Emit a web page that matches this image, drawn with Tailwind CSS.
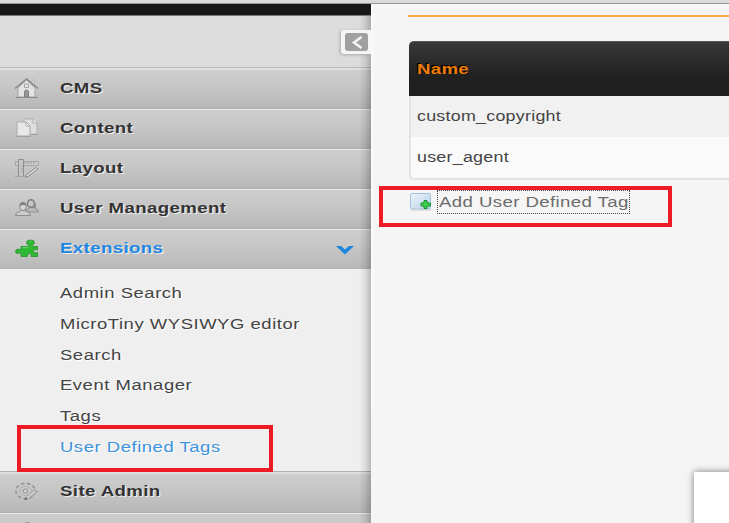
<!DOCTYPE html>
<html lang="en">
<head>
<meta charset="utf-8">
<title>User Defined Tags</title>
<script src="https://cdn.jsdelivr.net/npm/@tailwindcss/browser@4"></script>
</head>
<body class="w-[729px] h-[523px] overflow-hidden bg-[#f5f5f5] font-['Liberation_Sans',sans-serif] text-[14px] leading-[20px] text-[#333]">
<div class="relative w-[729px] h-[523px] overflow-hidden flex flex-col">
  <div class="h-[4px] shrink-0 bg-[#dadada] border-b border-[#999]"></div>
  <div class="flex h-[519px]">
    <aside class="relative w-[371px] shrink-0 flex flex-col bg-[#dcdcdc]">
      <div class="h-[12px] shrink-0 bg-[#171717] border-b border-[#777]"></div>
      <div class="h-[52px] shrink-0 border-b border-[#b8b8b8] bg-[#dcdcdc]"></div>
      <nav class="flex flex-col whitespace-nowrap font-bold tracking-[0.3px] [text-shadow:1px_1px_0_#eee]">
        <div class="h-[41px] shrink-0 flex items-center pl-[14px] pb-[3px] border-t-2 border-t-[#dfdfdf] border-b border-b-[#adadad] bg-linear-to-b from-[#cfcfcf] via-[#c5c5c5] to-[#b7b7b7]">
          <svg class="w-[26px] h-[22px] mr-[20px]" viewBox="0 0 26 22" fill="none"><path d="M4 11v9h17v-9l-8.500-8z" fill="#e3e3e3" stroke="#a5a5a5"/><path d="M18 3h2.500v5l-2.500-2z" fill="#ddd" stroke="#b5b5b5"/><path d="M1 11.500 12.500 2 24 11.500" stroke="#8a8a8a" stroke-width="1.600"/><path d="M10.500 7h4v3.500h-4z" stroke="#a5a5a5"/><path d="M10.500 20v-5q0-2 2-2t2 2v5z" fill="#999" stroke="#808080"/><path d="M2 20.500h22" stroke="#888"/></svg>
          <span class="origin-left scale-x-[1.33]">CMS</span>
        </div>
        <div class="h-[40px] shrink-0 flex items-center pl-[14px] pb-[2px] border-t border-t-[#eee] border-b border-b-[#adadad] bg-linear-to-b from-[#cfcfcf] via-[#c5c5c5] to-[#b7b7b7]">
          <svg class="w-[26px] h-[22px] mr-[20px]" viewBox="0 0 26 22" fill="none"><path d="M10 2h9l4 4v11H10z" fill="#dedede" stroke="#b0b0b0"/><path d="M19 2v4h4" fill="#f5f5f5" stroke="#aaa"/><path d="M3 5h9l4 4v10H3z" fill="#e8e8e8" stroke="#aaa"/><path d="M12 5v4h4z" fill="#f5f5f5" stroke="#aaa"/><path d="M2 19.500h15M17 17.500h7" stroke="#a2a2a2"/></svg>
          <span class="origin-left scale-x-[1.33]">Content</span>
        </div>
        <div class="h-[40px] shrink-0 flex items-center pl-[14px] pb-[2px] border-t border-t-[#eee] border-b border-b-[#adadad] bg-linear-to-b from-[#cfcfcf] via-[#c5c5c5] to-[#b7b7b7]">
          <svg class="w-[26px] h-[22px] mr-[20px]" viewBox="0 0 26 22" fill="none"><path d="M1.500 4.500h23v4h-23z" fill="#ccc" stroke="#a5a5a5"/><path d="M11 5v2M14 5v2M17 5v2M20 5v2" stroke="#999"/><path d="M4.500 2.500h5v17h-5z" fill="#c6c6c6" stroke="#8e8e8e"/><path d="M7 9h2M7 12h2M7 15h2" stroke="#a0a0a0"/><path d="m12 18 10-7.500 2 1.500-10 7.500-3 .500z" fill="#ddd" stroke="#888"/><path d="M1 19.500h9" stroke="#a5a5a5"/></svg>
          <span class="origin-left scale-x-[1.33]">Layout</span>
        </div>
        <div class="h-[40px] shrink-0 flex items-center pl-[14px] pb-[2px] border-t border-t-[#eee] border-b border-b-[#adadad] bg-linear-to-b from-[#cfcfcf] via-[#c5c5c5] to-[#b7b7b7]">
          <svg class="w-[26px] h-[22px] mr-[20px]" viewBox="0 0 26 22" fill="none"><path d="M12 15q0-3 3-4l2-1h2l2 1q3.500 1 3.500 4z" fill="#b8b8b8" stroke="#909090"/><ellipse cx="17" cy="6.500" rx="3.500" ry="3.800" fill="#c5c5c5" stroke="#808080" stroke-width="1.500"/><path d="M20 5q2 3 1 6" stroke="#8a8a8a" stroke-width="1.500"/><path d="M1.500 18.500q0-3.500 4-4l2-1h3l2 1q4 .500 4 4z" fill="#ccc" stroke="#8c8c8c"/><ellipse cx="9" cy="9.800" rx="3.300" ry="3.800" fill="#d5d5d5" stroke="#848484"/><path d="M5.500 9q0-4 3.500-4t3.500 4q-2-2-7 0z" fill="#808080"/></svg>
          <span class="origin-left scale-x-[1.33]">User Management</span>
        </div>
        <div class="h-[40px] shrink-0 flex items-center pl-[14px] pb-[2px] border-t border-t-[#eee] border-b border-b-[#b3b3b3] bg-linear-to-b from-[#cfcfcf] via-[#c5c5c5] to-[#b9b9b9] text-[#1e86e0]">
          <svg class="w-[26px] h-[22px] mr-[20px]" viewBox="0 0 26 22" fill="none"><path d="M7 9.500h6.800q1.200-1 .200-2-1.500-.300-1.500-2 0-2.500 4-2.500t4 2.500q0 1.700-1.500 2-1 1 .200 2H23.500V13q-2-.800-3.500 0-1.500 1.200 0 2.500 1.500.800 3.500 0v4H17q1-3-1.500-3t-2 3H7V16q-1.500-.500-2.500.500Q1.500 17 1.500 14.500t3-2.300Q6 13 7 12.500z" fill="#2eb833" stroke="#2f9632" stroke-width=".9"/><path d="M8.500 10.700h6M15.500 4.200h2" stroke="#65d466"/></svg>
          <span class="origin-left scale-x-[1.33]">Extensions</span>
          <svg class="w-[18px] h-[9px] ml-auto mr-[17px] mt-[4px]" viewBox="0 0 18 9"><path d="M0 0h5l4 3.500L13 0h5L9 8.500z" fill="#1e86e0"/></svg>
        </div>
        <ul class="h-[202px] shrink-0 pt-[9px] pl-[60px] bg-[#efefef] font-normal text-[#444] leading-[30.800px] tracking-[0.400px] [text-shadow:1px_1px_0_#fff]">
          <li class="origin-left scale-x-[1.32]">Admin Search</li>
          <li class="origin-left scale-x-[1.32]">MicroTiny WYSIWYG editor</li>
          <li class="origin-left scale-x-[1.32]">Search</li>
          <li class="origin-left scale-x-[1.32]">Event Manager</li>
          <li class="origin-left scale-x-[1.32]">Tags</li>
          <li class="origin-left scale-x-[1.32] text-[#3e93dc]">User Defined Tags</li>
        </ul>
        <div class="h-[42px] shrink-0 flex items-center pl-[14px] pb-[2px] border-t border-t-[#b0b0b0] border-b border-b-[#adadad] shadow-[inset_0_2px_0_#dfdfdf] bg-linear-to-b from-[#cfcfcf] via-[#c5c5c5] to-[#b7b7b7]">
          <svg class="w-[26px] h-[22px] mr-[20px]" viewBox="0 0 26 22" fill="none"><ellipse cx="11.500" cy="11" rx="9.500" ry="7.500" stroke="#999" stroke-width="2" stroke-dasharray="3.500 2.400"/><ellipse cx="11.500" cy="11" rx="8.500" ry="6.500" fill="#c9c9c9"/><ellipse cx="11.500" cy="11" rx="6" ry="4.500" stroke="#b0b0b0"/><ellipse cx="11.500" cy="11" rx="2.500" ry="2" fill="#d2d2d2" stroke="#8c8c8c"/><path d="m12 17 8-7 3.500 1.500-9 7-3.500 1z" fill="#ccc" stroke="#999"/><path d="m10.500 20 3-1-2-1.500z" fill="#555"/></svg>
          <span class="origin-left scale-x-[1.33]">Site Admin</span>
        </div>
        <div class="h-[40px] shrink-0 flex items-start pl-[24px] pt-[8px] border-t border-t-[#eee] bg-[#cbcbcb]"><div class="w-[7px] h-[5px] rounded-[50%] bg-[#999]"></div></div>
      </nav>
      <div class="absolute right-0 top-[12px] bottom-0 w-[12px] bg-linear-to-r from-transparent via-black/8 to-black/22"></div>
      <div class="absolute right-0 top-[26px] w-[30px] h-[24px] flex items-center pl-[4px] rounded-l-[3px] bg-[#f5f5f5] shadow-[-1px_1px_3px_#aaa]">
        <div class="w-[23px] h-[18px] rounded-[3px] bg-[#a0a0a0] flex items-center justify-center"><svg class="w-[12px] h-[13px]" viewBox="0 0 12 13"><path d="M10.500 1 3 6.500l7.500 5.500" fill="none" stroke="#f5f5f5" stroke-width="2.500"/></svg></div>
      </div>
    </aside>
    <main class="grow min-w-0 pl-[37px] bg-[#f5f5f5] whitespace-nowrap">
      <div class="h-[13px] border-b-2 border-[#faa94a]"></div>
      <div class="mt-[24px] ml-[1px] w-[400px] rounded-[5px] overflow-hidden">
        <div class="h-[55px] pl-[8px] flex items-center bg-linear-to-b from-[#393939] to-[#202020] to-65% border-t border-[#555] text-[#ef7b00] font-bold tracking-[0.3px] [text-shadow:-1px_-1px_0_#000]"><span class="origin-left scale-x-[1.32]">Name</span></div>
        <div class="border-l-2 border-b-2 border-[#e2e2e2] rounded-bl-[5px] text-[#444] tracking-[0.200px]">
          <div class="h-[41px] pl-[6px] pb-[2px] flex items-center bg-[#f1f1f1]"><span class="origin-left scale-x-[1.275]">custom_copyright</span></div>
          <div class="h-[41px] pl-[6px] pb-[2px] flex items-center bg-[#fafafa] rounded-bl-[3px]"><span class="origin-left scale-x-[1.275]">user_agent</span></div>
        </div>
      </div>
      <div class="flex items-center pl-[2px] mt-[10px] h-[24px] text-[#6c6c6c]">
        <svg class="w-[22px] h-[18px] mr-[5px]" viewBox="0 0 22 18"><defs><linearGradient id="card" x2="1" y2="1"><stop stop-color="#edf5fb"/><stop offset="1" stop-color="#b5d0e8"/></linearGradient></defs><rect x=".5" y=".5" width="20" height="15.500" rx="1.500" fill="url(#card)" stroke="#a3c1dc"/><path d="M1 17h20" stroke="#ccc"/><path d="M14 7.500h3v2.500h3.500v3H17v2.500h-3V13h-3v-3h3z" fill="#41cf50" stroke="#16912b"/></svg>
        <span class="w-[193px] h-[24px] flex items-center pl-px border border-dotted border-[#444] tracking-[0.300px]"><span class="origin-left scale-x-[1.33]">Add User Defined Tag</span></span>
      </div>
    </main>
  </div>
  <div class="absolute left-[371px] top-[4px] w-[2px] h-[407px] bg-[#fafafa]"></div>
  <div class="absolute left-[694px] top-[472px] w-[60px] h-[70px] bg-white shadow-[0_0_7px_#777]"></div>
  <div class="absolute left-[379px] top-[186px] w-[293px] h-[41px] border-4 border-[#ed1c24]"></div>
  <div class="absolute left-[17px] top-[425px] w-[256px] h-[47px] border-4 border-[#ed1c24]"></div>
</div>
</body>
</html>
